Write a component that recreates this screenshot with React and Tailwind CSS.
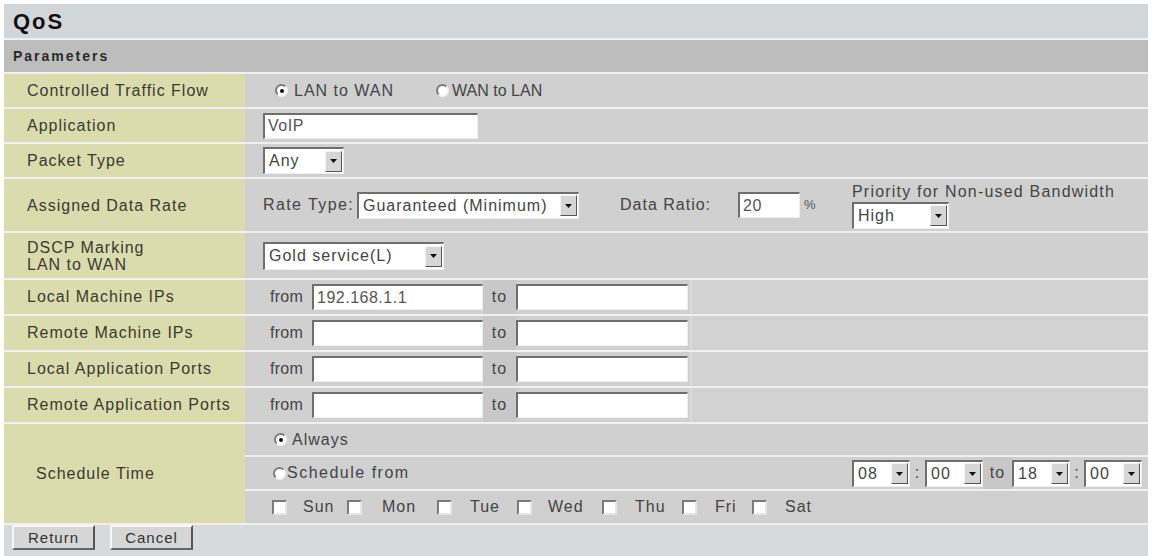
import { useState } from 'react';

const FONT = { fontFamily: '"Liberation Sans", Arial, sans-serif' };

function Radio({ checked }) {
  return (
    <span className="relative inline-block w-[13px] h-[13px] rounded-full bg-white border-2 border-t-[#7a7a7a] border-l-[#7a7a7a] border-r-[#f4f4f4] border-b-[#f4f4f4] shrink-0">
      {checked && <span className="absolute left-[2.5px] top-[2.5px] w-[4px] h-[4px] rounded-full bg-[#111]" />}
    </span>
  );
}

function Check() {
  return (
    <span className="inline-block w-[15px] h-[15px] bg-white border-2 border-t-[#7a7a7a] border-l-[#7a7a7a] border-r-[#e6e6e6] border-b-[#e6e6e6] shrink-0" />
  );
}

function TextBox({ value, className }) {
  return (
    <div className={'h-[26px] bg-white border-t-2 border-l-2 border-t-[#6e6e6e] border-l-[#6e6e6e] border-b border-r border-b-[#eeeeee] border-r-[#eeeeee] flex items-center pl-[3px] text-[#555] tracking-[0.5px] shrink-0 ' + className}>
      {value}
    </div>
  );
}

function Select({ value, className }) {
  return (
    <div className={'h-[27px] bg-white border-t-2 border-l-2 border-t-[#6e6e6e] border-l-[#6e6e6e] border-b border-r border-b-[#eeeeee] border-r-[#eeeeee] flex items-center justify-between pl-[4px] pr-[1px] text-[#444] shrink-0 ' + className}>
      <span>{value}</span>
      <span className="w-[17px] h-[21px] bg-[#d6d6d6] border border-t-[#f4f4f4] border-l-[#f4f4f4] border-r-[#555] border-b-[#555] flex items-center justify-center">
        <svg width="7" height="4" viewBox="0 0 7 4"><path d="M0 0h7L3.5 4z" fill="#111" /></svg>
      </span>
    </div>
  );
}

function Row({ label, h, children }) {
  return (
    <div className="flex" style={{ height: h }}>
      <div className="w-[241px] bg-[#dbdcae] flex items-center pl-[23px] text-[#3a3a30] leading-[17px]">{label}</div>
      <div className="flex-1 bg-[#d0d0d0] flex items-center pl-[18px]">{children}</div>
    </div>
  );
}

function RangeRow({ label, from }) {
  return (
    <div className="flex h-[34px]">
      <div className="w-[241px] bg-[#dbdcae] flex items-center pl-[23px] text-[#3a3a30]">{label}</div>
      <div className="flex-1 bg-[#d0d0d0] flex items-center pl-[25px]">
        <span className="w-[42px] text-[#444] tracking-[0.3px]">from</span>
        <TextBox value={from} className="w-[171px]" />
        <span className="h-full w-[33px] bg-[#c8c8c8] flex items-center justify-center text-[#444]">to</span>
        <TextBox value="" className="w-[172px]" />
        <span className="h-full flex-1 ml-[2px] border-l-2 border-[#dadada] bg-[#d2d2d2]" />
      </div>
    </div>
  );
}

const DAYS = [
  ['Sun', 'w-[75px]', 'ml-[16px]'],
  ['Mon', 'w-[90px]', 'ml-[20px]'],
  ['Tue', 'w-[80px]', 'ml-[18px]'],
  ['Wed', 'w-[85px]', 'ml-[16px]'],
  ['Thu', 'w-[80px]', 'ml-[18px]'],
  ['Fri', 'w-[70px]', 'ml-[18px]'],
  ['Sat', 'w-[70px]', 'ml-[18px]'],
];

export default function App() {
  const [days] = useState(DAYS);

  return (
    <div className="w-[1154px] h-[556px] bg-white pt-[4px] pl-[4px] pr-[6px] text-[16px] tracking-[1px] overflow-hidden" style={FONT}>
      <div className="flex flex-col gap-[2px] bg-[#f0f0f0] h-full">
        <div className="h-[34px] bg-[#d3d6d9] flex items-center pl-[9px] text-[22px] font-bold text-[#111] tracking-[2px]">QoS</div>
        <div className="h-[32px] bg-[#bdbdbd] flex items-center pl-[9px] text-[14px] font-bold text-[#2a2a2a] tracking-[2px]">Parameters</div>

        <Row label="Controlled Traffic Flow" h={33}>
          <div className="flex items-center gap-[6px] ml-[12px] text-[#444]">
            <Radio checked />
            <span>LAN to WAN</span>
          </div>
          <div className="flex items-center gap-[3px] ml-[42px] text-[#444]">
            <Radio />
            <span className="tracking-[0px]">WAN to LAN</span>
          </div>
        </Row>

        <Row label="Application" h={33}>
          <TextBox value="VoIP" className="w-[215px]" />
        </Row>

        <Row label="Packet Type" h={33}>
          <Select value="Any" className="w-[81px]" />
        </Row>

        <Row label="Assigned Data Rate" h={52}>
          <span className="w-[94px] text-[#444] tracking-[1.4px]">Rate Type:</span>
          <Select value="Guaranteed (Minimum)" className="w-[222px]" />
          <span className="ml-[41px] w-[118px] text-[#444]">Data Ratio:</span>
          <TextBox value="20" className="w-[62px]" />
          <span className="ml-[4px] w-[48px] text-[#555] text-[13px]">%</span>
          <div className="flex flex-col pt-[1px]">
            <span className="text-[#444] leading-[17px] mb-[2px] tracking-[1.2px]">Priority for Non-used Bandwidth</span>
            <Select value="High" className="w-[97px]" />
          </div>
        </Row>

        <Row label={<span>DSCP Marking<br />LAN to WAN</span>} h={45}>
          <Select value="Gold service(L)" className="w-[181px] h-[28px]" />
        </Row>

        <RangeRow label="Local Machine IPs" from="192.168.1.1" />
        <RangeRow label="Remote Machine IPs" from="" />
        <RangeRow label="Local Application Ports" from="" />
        <RangeRow label="Remote Application Ports" from="" />

        <div className="flex h-[99px]">
          <div className="w-[241px] bg-[#dbdcae] flex items-center pl-[32px] text-[#3a3a30]">Schedule Time</div>
          <div className="flex-1 flex flex-col gap-[2px]">
            <div className="h-[31px] bg-[#d0d0d0] flex items-center pl-[29px] gap-[5px] text-[#444]">
              <Radio checked />
              <span>Always</span>
            </div>
            <div className="h-[32px] bg-[#d0d0d0] flex items-center pl-[28px] text-[#444]">
              <Radio />
              <span className="ml-[1px] tracking-[1.5px]">Schedule from</span>
              <div className="ml-auto flex items-center h-full pr-[6px]">
                <Select value="08" className="w-[58px]" />
                <span className="w-[15px] text-center">:</span>
                <Select value="00" className="w-[58px]" />
                <span className="h-full w-[29px] bg-[#c8c8c8] flex items-center justify-center">to</span>
                <Select value="18" className="w-[58px]" />
                <span className="w-[14px] text-center">:</span>
                <Select value="00" className="w-[58px]" />
              </div>
            </div>
            <div className="h-[32px] bg-[#d0d0d0] flex items-center pl-[27px] text-[#444]">
              {days.map(([d, w, ml]) => (
                <div key={d} className={'flex items-center ' + w}>
                  <Check />
                  <span className={ml}>{d}</span>
                </div>
              ))}
            </div>
          </div>
        </div>

        <div className="flex-1 bg-[#d8d9db] flex items-start pt-[0px] pl-[8px] gap-[15px]">
          <button className="w-[83px] h-[25px] bg-[#d6d6d6] border-2 border-t-[#f6f6f6] border-l-[#f6f6f6] border-r-[#555] border-b-[#666] text-[15px] text-[#333] tracking-[1px]">Return</button>
          <button className="w-[83px] h-[25px] bg-[#d6d6d6] border-2 border-t-[#f6f6f6] border-l-[#f6f6f6] border-r-[#555] border-b-[#666] text-[15px] text-[#333] tracking-[1px]">Cancel</button>
        </div>
      </div>
    </div>
  );
}
